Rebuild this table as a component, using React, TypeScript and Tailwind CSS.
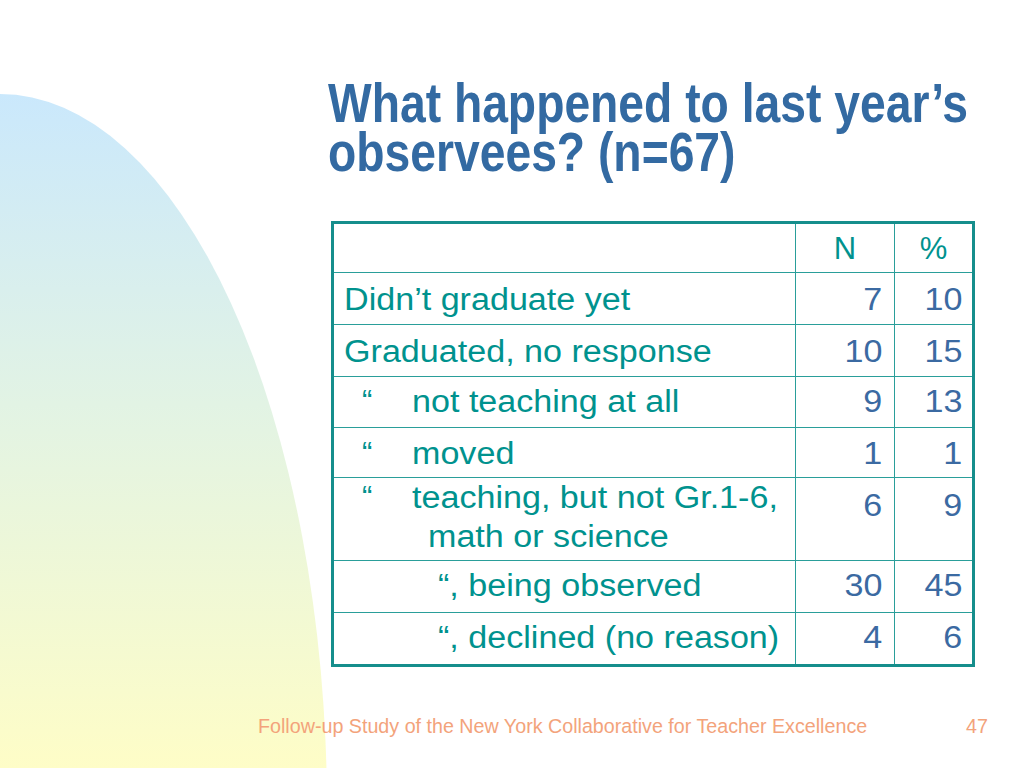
import React from "react";

const labelCls =
  "inline-block whitespace-nowrap origin-left scale-x-[1.1] text-[#00928e]";
const numCls =
  "inline-block whitespace-nowrap origin-right scale-x-[1.1] text-[#3b6aa2]";

type Row = {
  h: string;
  pt: string;
  numPt: string;
  label: React.ReactNode;
  n: string;
  p: string;
  last?: boolean;
};

const rows: Row[] = [
  {
    h: "h-[52px]",
    pt: "pt-[9px]",
    numPt: "pt-[9px]",
    label: <span className={labelCls}>Didn’t graduate yet</span>,
    n: "7",
    p: "10",
  },
  {
    h: "h-[52px]",
    pt: "pt-[9px]",
    numPt: "pt-[9px]",
    label: <span className={labelCls}>Graduated, no response</span>,
    n: "10",
    p: "15",
  },
  {
    h: "h-[51px]",
    pt: "pt-[7px]",
    numPt: "pt-[7px]",
    label: (
      <div className="flex">
        <span className="w-[68px] pl-[18px] text-[#00928e]">“</span>
        <span className={labelCls}>not teaching at all</span>
      </div>
    ),
    n: "9",
    p: "13",
  },
  {
    h: "h-[50px]",
    pt: "pt-[8px]",
    numPt: "pt-[8px]",
    label: (
      <div className="flex">
        <span className="w-[68px] pl-[18px] text-[#00928e]">“</span>
        <span className={labelCls}>moved</span>
      </div>
    ),
    n: "1",
    p: "1",
  },
  {
    h: "h-[83px]",
    pt: "pt-0",
    numPt: "pt-[10px]",
    label: (
      <div className="flex leading-[39px]">
        <span className="w-[68px] pl-[18px] text-[#00928e]">“</span>
        <div className="flex flex-col">
          <span className={labelCls}>teaching, but not Gr.1-6,</span>
          <span className={labelCls + " ml-[16px]"}>math or science</span>
        </div>
      </div>
    ),
    n: "6",
    p: "9",
  },
  {
    h: "h-[52px]",
    pt: "pt-[7px]",
    numPt: "pt-[7px]",
    label: (
      <span className={labelCls + " ml-[94px]"}>“, being observed</span>
    ),
    n: "30",
    p: "45",
  },
  {
    h: "h-[51px]",
    pt: "pt-[7px]",
    numPt: "pt-[7px]",
    label: (
      <span className={labelCls + " ml-[94px]"}>“, declined (no reason)</span>
    ),
    n: "4",
    p: "6",
    last: true,
  },
];

export default function App() {
  return (
    <div
      className="relative w-[1024px] h-[768px] overflow-hidden bg-white"
      style={{ fontFamily: '"Liberation Sans", Arial, sans-serif' }}
    >
      <svg
        className="absolute inset-0"
        width="1024"
        height="768"
        viewBox="0 0 1024 768"
      >
        <defs>
          <linearGradient
            id="bg"
            gradientUnits="userSpaceOnUse"
            x1="0"
            y1="94"
            x2="0"
            y2="768"
          >
            <stop offset="0" stopColor="#cae8fc" />
            <stop offset="0.5" stopColor="#e4f4e2" />
            <stop offset="1" stopColor="#fefdc7" />
          </linearGradient>
        </defs>
        <ellipse cx="0" cy="810" rx="327" ry="716" fill="url(#bg)" />
      </svg>

      <div className="relative flex flex-col">
        {/* Title */}
        <div className="ml-[328px] mt-[78px] text-[56px] leading-[49px] font-bold text-[#336aa2]">
          <div className="whitespace-nowrap origin-left scale-x-[0.826]">
            What happened to last year’s
          </div>
          <div className="whitespace-nowrap origin-left scale-x-[0.826]">
            observees? (n=67)
          </div>
        </div>

        {/* Table */}
        <div className="ml-[331px] mt-[45px] w-[644px] border-[3px] border-[#168e8c] bg-white text-[31px] leading-[36px]">
          <div className="flex h-[49px] border-b border-[#2a9e9a]">
            <div className="w-[462px] border-r border-[#2a9e9a]" />
            <div className="w-[99px] border-r border-[#2a9e9a] flex justify-center pt-[7px] text-[#00928e]">
              N
            </div>
            <div className="flex-1 flex justify-center pt-[7px] text-[#00928e]">
              %
            </div>
          </div>
          {rows.map((r, i) => (
            <div
              key={i}
              className={`flex ${r.h} ${r.last ? "" : "border-b border-[#2a9e9a]"}`}
            >
              <div
                className={`w-[462px] border-r border-[#2a9e9a] pl-[10px] ${r.pt}`}
              >
                {r.label}
              </div>
              <div
                className={`w-[99px] border-r border-[#2a9e9a] flex justify-end pr-[12px] ${r.numPt}`}
              >
                <span className={numCls}>{r.n}</span>
              </div>
              <div className={`flex-1 flex justify-end pr-[10px] ${r.numPt}`}>
                <span className={numCls}>{r.p}</span>
              </div>
            </div>
          ))}
        </div>

        {/* Footer */}
        <div className="ml-[258px] mt-[48px] flex text-[19.7px] leading-[23px] text-[#f3a37b]">
          <span className="w-[708px] whitespace-nowrap">
            Follow-up Study of the New York Collaborative for Teacher Excellence
          </span>
          <span>47</span>
        </div>
      </div>
    </div>
  );
}
